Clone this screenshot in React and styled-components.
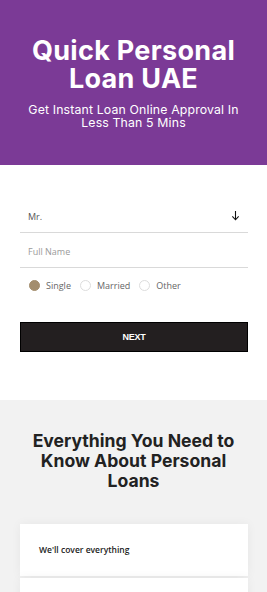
import React from 'react'
import styled, { createGlobalStyle } from 'styled-components'

const GlobalStyle = createGlobalStyle`
  html, body {
    margin: 0;
    padding: 0;
    background: #fff;
    font-family: 'Open Sans', 'Noto Sans', sans-serif;
  }
  * { box-sizing: border-box; }
`

export default () => (
  <Page>
    <GlobalStyle />
    <Hero>
      <Title>Quick Personal Loan UAE</Title>
      <Subtitle>Get Instant Loan Online Approval In Less Than 5 Mins</Subtitle>
    </Hero>

    <Form>
      <Field>
        <FieldText>Mr.</FieldText>
        <Arrow viewBox="0 0 10 12">
          <path d="M5 1v9.5M1.5 7l3.5 3.8L8.5 7" fill="none" stroke="#111" strokeWidth="1.2" />
        </Arrow>
      </Field>
      <Field>
        <FieldText placeholder>Full Name</FieldText>
      </Field>
      <Radios>
        {['Single', 'Married', 'Other'].map((label, i) => (
          <RadioItem key={label}>
            <RadioDot checked={i === 0} />
            {label}
          </RadioItem>
        ))}
      </Radios>
      <NextButton>NEXT</NextButton>
    </Form>

    <Info>
      <InfoHeading>Everything You Need to Know About Personal Loans</InfoHeading>
      <Card>
        <CardTitle>We'll cover everything</CardTitle>
      </Card>
      <Card />
    </Info>
  </Page>
)

const Page = styled.div`
  width: 267px;
  overflow: hidden;
`

const Hero = styled.header`
  background: #7b3a96;
  height: 165px;
  padding: 37px 14px 0;
  text-align: center;
  color: #fff;
`

const Title = styled.h1`
  margin: 0;
  font-family: 'Inter', 'Noto Sans', sans-serif;
  font-weight: 700;
  font-size: 27px;
  line-height: 28px;
  letter-spacing: 0.3px;
`

const Subtitle = styled.p`
  margin: 10px 0 0;
  font-family: 'Inter', 'Noto Sans', sans-serif;
  font-size: 12.3px;
  line-height: 13px;
  letter-spacing: 0.15px;
  font-weight: 400;
`

const Form = styled.section`
  padding: 34px 19px 48px 20px;
`

const Field = styled.div`
  display: flex;
  align-items: center;
  justify-content: space-between;
  height: 34px;
  padding: 0 8px 0 8px;
  border-bottom: 1px solid #d9d9d9;
  & + & {
    margin-top: 1px;
  }
`

const FieldText = styled.span`
  font-size: 9px;
  color: ${p => (p.placeholder ? '#9a9a9a' : '#555')};
  padding-top: 2px;
`

const Arrow = styled.svg`
  width: 9px;
  height: 11px;
`

const Radios = styled.div`
  display: flex;
  gap: 9px;
  padding: 11px 0 0 9px;
  height: 36px;
`

const RadioItem = styled.label`
  display: flex;
  align-items: center;
  gap: 6px;
  font-size: 9px;
  color: #666;
  height: 13px;
`

const RadioDot = styled.span`
  width: 11px;
  height: 11px;
  border-radius: 50%;
  background: ${p => (p.checked ? '#a38d6d' : '#fff')};
  border: 1px solid ${p => (p.checked ? '#a38d6d' : '#ddd')};
`

const NextButton = styled.button`
  display: block;
  width: 100%;
  height: 30px;
  margin-top: 18px;
  background: #231f20;
  border: 1px solid #000;
  color: #fff;
  font-family: 'Liberation Sans', Arial, sans-serif;
  font-size: 9px;
  font-weight: 700;
  letter-spacing: -0.3px;
`

const Info = styled.section`
  background: #f2f2f2;
  padding: 31px 14px 0 14px;
  height: 200px;
`

const InfoHeading = styled.h2`
  margin: 0 4px;
  font-family: 'Inter', 'Noto Sans', sans-serif;
  font-weight: 700;
  font-size: 17.6px;
  line-height: 20px;
  color: #222;
  text-align: center;
`

const Card = styled.div`
  background: #fff;
  height: 52px;
  margin: 0 5px 0 6px;
  padding: 20px 19px;
  box-shadow: 0 0 10px rgba(0, 0, 0, 0.05);
  &:first-of-type {
    margin-top: 33px;
  }
  & + & {
    margin-top: 2px;
  }
`

const CardTitle = styled.div`
  font-size: 8.5px;
  font-weight: 600;
  color: #222;
`
